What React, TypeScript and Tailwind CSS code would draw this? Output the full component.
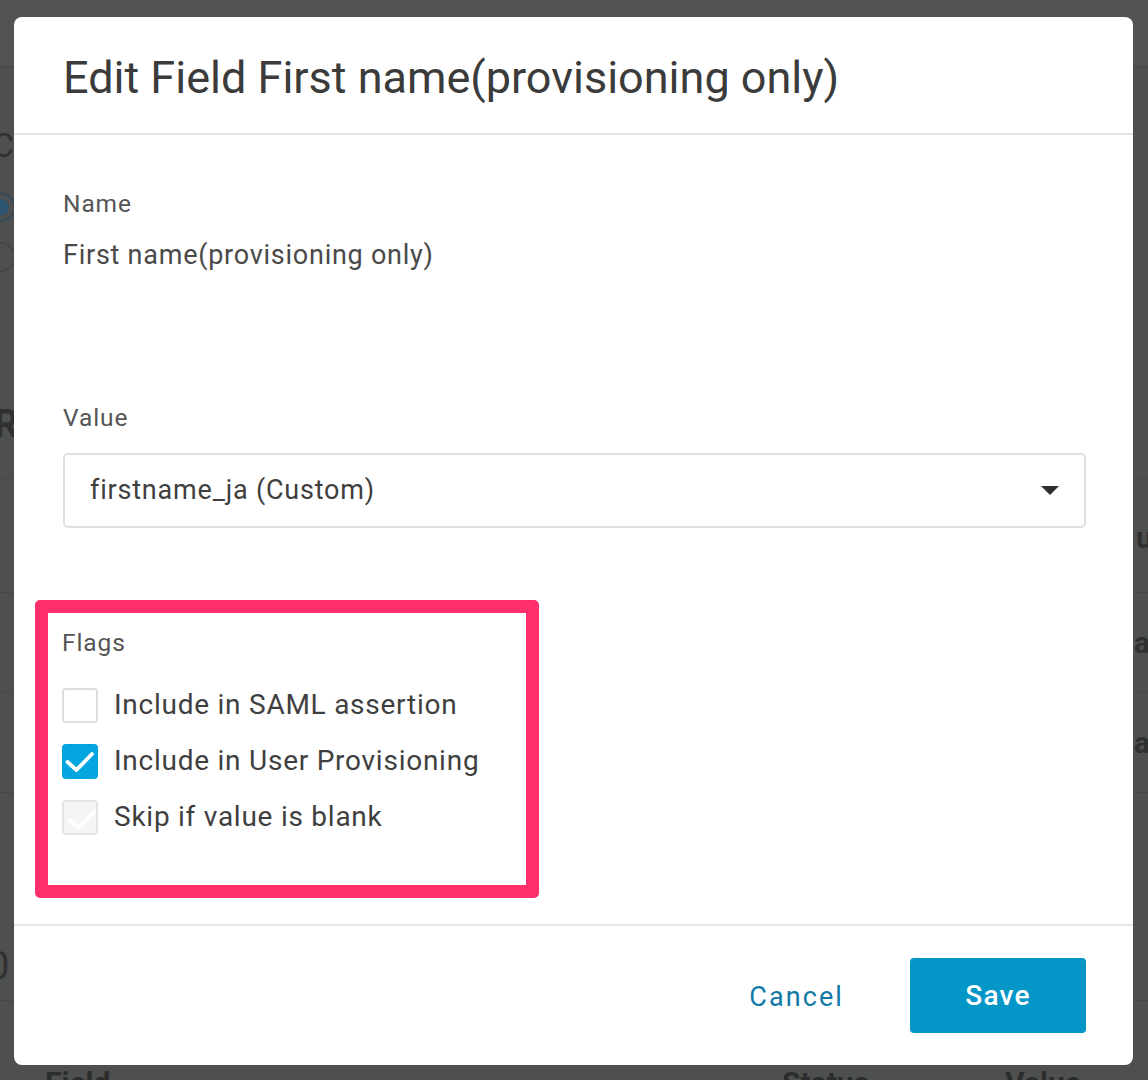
import React from "react";

function Check({ color }: { color: string }) {
  return (
    <svg className="absolute left-0 top-0" width="36" height="35" viewBox="0 0 36 35" fill="none">
      <polyline points="5.5,18 14.5,26 30,10" stroke={color} strokeWidth="3.8" strokeLinecap="round" strokeLinejoin="round" />
    </svg>
  );
}

function Row({ state, label }: { state: "off" | "on" | "disabled"; label: string }) {
  let box = "relative w-[36px] h-[35px] rounded-[4px] border-2 border-[#dedede] bg-white";
  if (state === "on") box = "relative w-[36px] h-[35px] rounded-[4px] bg-[#03a6de]";
  if (state === "disabled") box = "relative w-[36px] h-[35px] rounded-[4px] border-2 border-[#e4e4e4] bg-[#f5f5f5]";
  return (
    <div className="flex items-center h-[36px]">
      <div className={box}>
        {state === "on" && <Check color="#ffffff" />}
        {state === "disabled" && <Check color="#ffffff" />}
      </div>
      <span className="ml-[16px] text-[28px] text-[#3f3f3f] tracking-[0.75px]">{label}</span>
    </div>
  );
}

export default function App() {
  return (
    <div className="relative w-[1148px] h-[1080px] overflow-hidden bg-[#4e504f]" style={{ fontFamily: "Roboto, 'Noto Sans', sans-serif" }}>
      {/* page behind the overlay */}
      <div className="absolute left-0 top-0 w-full h-[67px] bg-[#525453] border-b border-[#474948]" />
      <div className="absolute left-[-8px] top-[120px] text-[34px] text-[#2f3131]">C</div>
      <div className="absolute left-[-14px] top-[192px] w-[30px] h-[30px] rounded-full border-[3px] border-[#3c4a55] flex items-center justify-center">
        <div className="w-[16px] h-[16px] rounded-full bg-[#2d5470]" />
      </div>
      <div className="absolute left-[-14px] top-[242px] w-[30px] h-[30px] rounded-full border-2 border-[#444646]" />
      <div className="absolute left-[-6px] top-[396px] text-[38px] font-bold text-[#2f3131]">R</div>
      <div className="absolute left-0 top-[478px] w-full h-px bg-[#474948]" />
      <div className="absolute left-0 top-[592px] w-full h-px bg-[#474948]" />
      <div className="absolute left-0 top-[692px] w-full h-px bg-[#474948]" />
      <div className="absolute left-0 top-[792px] w-full h-px bg-[#474948]" />
      <div className="absolute left-0 top-[1000px] w-full h-px bg-[#474948]" />
      <div className="absolute left-[1136px] top-[515px] text-[30px] font-bold text-[#2f3131]">u</div>
      <div className="absolute left-[1134px] top-[620px] text-[30px] font-bold text-[#2f3131]">ai</div>
      <div className="absolute left-[1134px] top-[720px] text-[30px] font-bold text-[#2f3131]">ai</div>
      <div className="absolute left-[-12px] top-[938px] text-[38px] text-[#2f3131]">0</div>
      <div className="absolute left-[45px] top-[1060px] text-[30px] font-bold text-[#2b2d2d]">Field</div>
      <div className="absolute left-[782px] top-[1060px] text-[30px] font-bold text-[#2b2d2d]">Status</div>
      <div className="absolute left-[1005px] top-[1060px] text-[30px] font-bold text-[#2b2d2d]">Value</div>

      {/* modal */}
      <div className="absolute left-[14px] top-[17px] w-[1119px] h-[1048px] bg-white rounded-[8px] flex flex-col">
        <div className="h-[118px] flex items-center px-[49px] border-b-2 border-[#e6e6e6] shrink-0">
          <h1 className="text-[45px] text-[#3b3b3b] leading-none pt-[4px]">Edit Field First name(provisioning only)</h1>
        </div>

        <div className="flex-1 flex flex-col pl-[49px] pr-[47px] pt-[54px]">
          <div className="text-[24.5px] leading-[30px] text-[#555555] tracking-[0.9px]">Name</div>
          <div className="mt-[21px] text-[27px] leading-[30px] text-[#4a4a4a] tracking-[0.75px]">First name(provisioning only)</div>

          <div className="mt-[133px] text-[24.5px] leading-[30px] text-[#555555] tracking-[0.9px]">Value</div>
          <div className="mt-[20px] h-[75px] rounded-[5px] border-2 border-[#e0e0e0] flex items-center justify-between pl-[25px] pr-[25px]">
            <span className="text-[27px] text-[#3f3f3f] tracking-[0.8px]">firstname_ja (Custom)</span>
            <svg width="18" height="10" viewBox="0 0 18 10">
              <polygon points="0,0 18,0 9,9" fill="#2f2f2f" />
            </svg>
          </div>

          <div className="mt-[72px] ml-[-28px] w-[504px] h-[298px] border-[13px] border-[#ff2f6e] rounded-[5px] pl-[14px] pt-[15px]">
            <div className="text-[24.5px] leading-[30px] text-[#555555] tracking-[0.9px]">Flags</div>
            <div className="mt-[29px] flex flex-col gap-[20px]">
              <Row state="off" label="Include in SAML assertion" />
              <Row state="on" label="Include in User Provisioning" />
              <Row state="disabled" label="Skip if value is blank" />
            </div>
          </div>
        </div>

        <div className="h-[141px] shrink-0 border-t-2 border-[#e6e6e6] flex items-center justify-end pr-[47px]">
          <button className="text-[27px] text-[#1279a6] tracking-[2.1px] mr-[66px] pt-[3px]">Cancel</button>
          <button className="w-[176px] h-[75px] rounded-[4px] bg-[#0396c7] text-white text-[28px] font-medium tracking-[1.2px]">Save</button>
        </div>
      </div>
    </div>
  );
}
